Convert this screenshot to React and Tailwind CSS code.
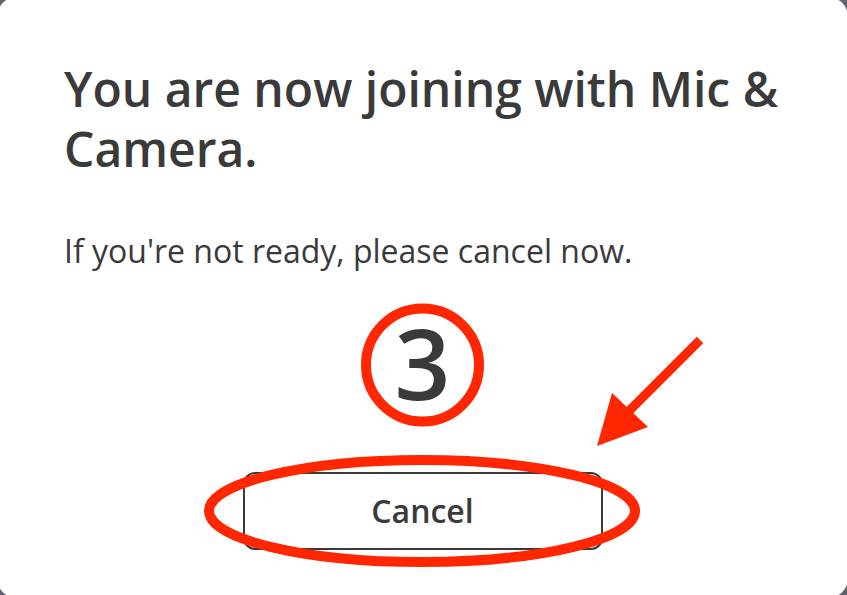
import React from "react";

export default function App() {
  return (
    <div className="relative w-[847px] h-[595px] overflow-hidden bg-[#62626e] font-['Open_Sans',sans-serif] text-[#3a3a3a]">
      <div className="-ml-[3px] -mt-[3px] w-[851px] h-[601px] rounded-[20px] bg-white flex flex-col pl-[67px] pr-[50px] pt-[62px]">
        <h1 className="text-[48px] leading-[60px] font-semibold">
          You are now joining with Mic &amp; Camera.
        </h1>
        <p className="mt-[50px] text-[32px] leading-[44px]">
          If you're not ready, please cancel now.
        </p>
        <div className="mt-[40px] w-[717px] flex justify-center">
          <span className="text-[98px] leading-none font-semibold">3</span>
        </div>
        <div className="mt-[61px] w-[717px] flex justify-center">
          <button className="w-[360px] h-[78px] rounded-[12px] border-2 border-[#3a3a3a] bg-white text-[32px] font-semibold text-[#3a3a3a]">
            Cancel
          </button>
        </div>
      </div>
      <svg
        className="absolute inset-0 pointer-events-none"
        width="847"
        height="595"
        viewBox="0 0 847 595"
      >
        <circle cx="422.5" cy="365" r="56.5" fill="none" stroke="#ff2600" strokeWidth="10" />
        <ellipse cx="422" cy="511" rx="213" ry="51" fill="none" stroke="#ff2600" strokeWidth="10" />
        <line x1="700" y1="340" x2="628" y2="412" stroke="#ff2600" strokeWidth="9" />
        <polygon points="597,446 612,393 648,427" fill="#ff2600" />
      </svg>
    </div>
  );
}
